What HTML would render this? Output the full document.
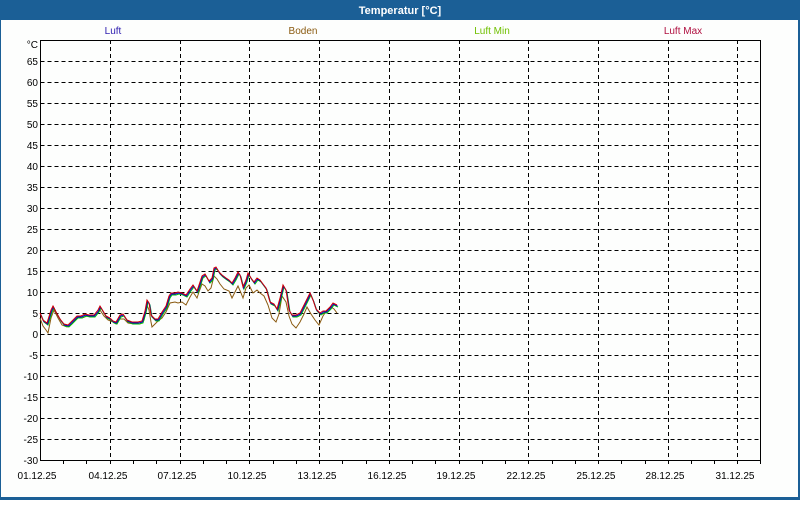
<!DOCTYPE html>
<html><head><meta charset="utf-8"><style>
html,body{margin:0;padding:0;background:#fff;}
body{width:800px;height:500px;overflow:hidden;font-family:"Liberation Sans",Tahoma,sans-serif;}
</style></head><body>
<svg width="800" height="500" xmlns="http://www.w3.org/2000/svg" font-family="Liberation Sans, DejaVu Sans, sans-serif" font-size="10">
<rect x="0" y="0" width="800" height="500" fill="#1b5f96"/>
<rect x="1" y="20" width="797" height="477" fill="#fdfefd"/>
<text x="400" y="14" text-anchor="middle" fill="#fff" font-weight="bold" font-size="11">Temperatur [°C]</text>
<text x="113" y="34" text-anchor="middle" fill="#3020b0">Luft</text>
<text x="303" y="34" text-anchor="middle" fill="#8a5a10">Boden</text>
<text x="492" y="34" text-anchor="middle" fill="#70c000">Luft Min</text>
<text x="683" y="34" text-anchor="middle" fill="#b01040">Luft Max</text>
<g stroke="#000" stroke-width="1" stroke-dasharray="4,3" fill="none" shape-rendering="crispEdges">
<path d="M40.5 61.5H760M40.5 82.5H760M40.5 103.5H760M40.5 124.5H760M40.5 145.5H760M40.5 166.5H760M40.5 187.5H760M40.5 208.5H760M40.5 229.5H760M40.5 250.5H760M40.5 271.5H760M40.5 292.5H760M40.5 313.5H760M40.5 334.5H760M40.5 355.5H760M40.5 376.5H760M40.5 397.5H760M40.5 418.5H760M40.5 439.5H760"/>
<path d="M110.5 40V460M180.5 40V460M249.5 40V460M319.5 40V460M389.5 40V460M459.5 40V460M528.5 40V460M598.5 40V460M668.5 40V460M737.5 40V460"/>
</g>
<g stroke="#000" fill="none" shape-rendering="crispEdges">
<path d="M40.5 40V460.5H760.5V40.5H40"/>
<path d="M63.5 460V464M86.5 460V464M110.5 460V464M133.5 460V464M156.5 460V464M180.5 460V464M203.5 460V464M226.5 460V464M249.5 460V464M273.5 460V464M296.5 460V464M319.5 460V464M342.5 460V464M366.5 460V464M389.5 460V464M412.5 460V464M435.5 460V464M459.5 460V464M482.5 460V464M505.5 460V464M528.5 460V464M552.5 460V464M575.5 460V464M598.5 460V464M621.5 460V464M645.5 460V464M668.5 460V464M691.5 460V464M714.5 460V464M737.5 460V464M760.5 460V464"/>
</g>
<g text-anchor="end" fill="#000">
<text x="38" y="48">°C</text>
<text x="38" y="65">65</text><text x="38" y="86">60</text><text x="38" y="107">55</text><text x="38" y="128">50</text><text x="38" y="149">45</text><text x="38" y="170">40</text><text x="38" y="191">35</text><text x="38" y="212">30</text><text x="38" y="233">25</text><text x="38" y="254">20</text><text x="38" y="275">15</text><text x="38" y="296">10</text><text x="38" y="317">5</text><text x="38" y="338">0</text><text x="38" y="359">-5</text><text x="38" y="380">-10</text><text x="38" y="401">-15</text><text x="38" y="422">-20</text><text x="38" y="443">-25</text><text x="38" y="464">-30</text>
</g>
<g text-anchor="middle" fill="#000">
<text x="37" y="479">01.12.25</text><text x="108" y="479">04.12.25</text><text x="177" y="479">07.12.25</text><text x="247" y="479">10.12.25</text><text x="317" y="479">13.12.25</text><text x="387" y="479">16.12.25</text><text x="456" y="479">19.12.25</text><text x="526" y="479">22.12.25</text><text x="596" y="479">25.12.25</text><text x="665" y="479">28.12.25</text><text x="735" y="479">31.12.25</text>
</g>
<g fill="none" stroke-width="1">
<polyline stroke="#8a5a10" points="40,318 43,326 46,330 48,333 51,318 54,310 58,318 62,325 67,327 72,324 77,318 82,318 87,316 92,317 98,313 100,310 104,316 108,320 113,322 116,324 120,319 124,319 128,323 134,324 140,324 144,320 147,305 149,310 151,322 152,327 155,324 158,321 162,318 166,312 170,303 175,302 178,303 182,302 186,305 190,297 193,292 197,298 199,292 202,284 205,286 208,291 211,288 214,276 217,279 220,284 224,289 229,291 232,298 236,290 238,286 241,293 243,298 246,288 249,285 253,293 257,290 260,293 264,296 268,305 272,318 276,322 279,314 282,296 286,302 289,316 292,324 296,328 300,322 304,314 307,307 311,314 315,320 319,325 323,316 327,310 331,307 334,309 337,313"/>
<polyline stroke="#00c000" transform="translate(1,2)" points="40,313 43,320 47,323 51,310 53,306 56,312 60,319 64,324 68,325 72,321 77,316 81,316 85,314 89,315 94,315 98,310 100,306 103,311 106,316 110,318 113,321 116,322 120,315 123,314 127,320 132,322 138,322 142,321 145,311 147,300 149,303 151,315 155,319 158,319 162,312 166,306 169,296 171,293 175,293 178,292 182,293 186,295 190,289 193,285 197,291 199,285 202,276 205,274 209,281 212,278 214,268 216,267 219,272 222,275 226,278 229,280 232,283 235,278 238,272 240,275 243,287 246,280 248,273 251,278 254,282 257,278 260,280 263,284 266,288 270,302 274,304 277,309 280,298 283,285 286,290 289,310 292,315 296,315 300,313 304,305 307,299 310,293 313,300 316,309 320,313 323,311 326,311 330,307 333,303 337,305"/>
<polyline stroke="#0000d0" transform="translate(0.5,1)" points="40,313 43,320 47,323 51,310 53,306 56,312 60,319 64,324 68,325 72,321 77,316 81,316 85,314 89,315 94,315 98,310 100,306 103,311 106,316 110,318 113,321 116,322 120,315 123,314 127,320 132,322 138,322 142,321 145,311 147,300 149,303 151,315 155,319 158,319 162,312 166,306 169,296 171,293 175,293 178,292 182,293 186,295 190,289 193,285 197,291 199,285 202,276 205,274 209,281 212,278 214,268 216,267 219,272 222,275 226,278 229,280 232,283 235,278 238,272 240,275 243,287 246,280 248,273 251,278 254,282 257,278 260,280 263,284 266,288 270,302 274,304 277,309 280,298 283,285 286,290 289,310 292,315 296,315 300,313 304,305 307,299 310,293 313,300 316,309 320,313 323,311 326,311 330,307 333,303 337,305"/>
<polyline stroke="#d00000" points="40,313 43,320 47,323 51,310 53,306 56,312 60,319 64,324 68,325 72,321 77,316 81,316 85,314 89,315 94,315 98,310 100,306 103,311 106,316 110,318 113,321 116,322 120,315 123,314 127,320 132,322 138,322 142,321 145,311 147,300 149,303 151,315 155,319 158,319 162,312 166,306 169,296 171,293 175,293 178,292 182,293 186,295 190,289 193,285 197,291 199,285 202,276 205,274 209,281 212,278 214,268 216,267 219,272 222,275 226,278 229,280 232,283 235,278 238,272 240,275 243,287 246,280 248,273 251,278 254,282 257,278 260,280 263,284 266,288 270,302 274,304 277,309 280,298 283,285 286,290 289,310 292,315 296,315 300,313 304,305 307,299 310,293 313,300 316,309 320,313 323,311 326,311 330,307 333,303 337,305"/>
</g>
</svg>
</body></html>
